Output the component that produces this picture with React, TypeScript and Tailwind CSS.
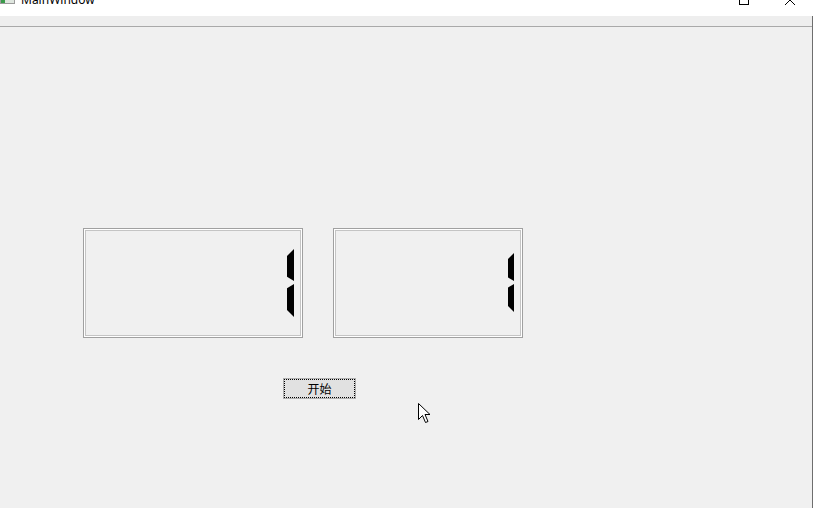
import React from "react";

// one lit segment of a seven-segment digit, right-hand column
function Segment({ w, h, upper }: { w: number; h: number; upper: boolean }) {
  const pts = upper
    ? `${w},0 ${w},${h} 0,${h - w * 0.6} 0,${w}`
    : `0,${w * 0.6} ${w},0 ${w},${h} 0,${h - w}`;
  return (
    <svg width={w} height={h} viewBox={`0 0 ${w} ${h}`} className="block">
      <polygon points={pts} fill="#000" />
    </svg>
  );
}

function LcdNumber({
  width,
  segW,
  topH,
  bottomH,
  topOffset,
  right,
}: {
  width: string;
  segW: number;
  topH: number;
  bottomH: number;
  topOffset: string;
  right: string;
}) {
  return (
    <div
      className={`${width} h-[110px] border border-[#a0a0a0] shadow-[inset_0_0_0_1px_#ffffff,inset_0_0_0_2px_#c4c4c4] flex flex-col items-end ${right}`}
    >
      <div className={`${topOffset} flex flex-col gap-[3px]`}>
        <Segment w={segW} h={topH} upper />
        <Segment w={segW} h={bottomH} upper={false} />
      </div>
    </div>
  );
}

function Cursor() {
  return (
    <svg
      width="14"
      height="21"
      viewBox="0 0 14 21"
      className="absolute left-[418px] top-[387px]"
    >
      <path
        d="M0.5 0.5 L0.5 16.5 L4.5 12.5 L7.5 19.5 L10 18.5 L7 11.5 L12 11.5 Z"
        fill="#fff"
        stroke="#000"
        strokeWidth="1"
        strokeLinejoin="miter"
      />
    </svg>
  );
}

export default function App() {
  return (
    <div className="w-[813px] h-[508px] overflow-hidden flex flex-col bg-[#f0f0f0] font-['Segoe_UI','Noto_Sans',sans-serif]">
      {/* title bar, its upper half is off screen */}
      <div className="h-4 shrink-0 bg-white overflow-hidden">
        <div className="h-[30px] -mt-[15px] flex items-center">
          <div className="w-[15px] h-[16px] -mt-[8px] border border-[#9a9a9a] bg-[#dfe6df] flex">
            <div className="w-[4px] bg-[#3a9a4a]" />
          </div>
          <span className="ml-[6px] text-[12px] text-black leading-none">
            MainWindow
          </span>
          <div className="ml-auto flex h-full">
            <div className="w-[46px] h-full flex items-center justify-center">
              <svg width="10" height="10" viewBox="0 0 10 10">
                <rect x="0.5" y="0.5" width="9" height="9" fill="none" stroke="#000" />
              </svg>
            </div>
            <div className="w-[46px] h-full flex items-center justify-center">
              <svg width="10" height="10" viewBox="0 0 10 10">
                <path d="M0 0 L10 10 M10 0 L0 10" stroke="#000" strokeWidth="1" />
              </svg>
            </div>
          </div>
        </div>
      </div>

      <div className="flex-1 flex flex-col border-r border-[#6e6e6e] relative">
        {/* menu bar strip */}
        <div className="h-[11px] shrink-0 bg-[#eeeeee] border-b border-[#a9a9a9]" />

        <div className="flex-1 flex flex-col">
          <div className="mt-[201px] ml-[83px] flex gap-[30px]">
            <LcdNumber
              width="w-[220px]"
              segW={7}
              topH={32}
              bottomH={33}
              topOffset="mt-[20px]"
              right="pr-[8px]"
            />
            <LcdNumber
              width="w-[190px]"
              segW={6}
              topH={28}
              bottomH={28}
              topOffset="mt-[24px]"
              right="pr-[8px]"
            />
          </div>

          <button className="mt-[40px] ml-[283px] w-[73px] h-[21px] bg-[#e1e1e1] border border-[#adadad] p-0">
            <div className="h-full w-full border border-dotted border-black flex items-center justify-center text-[12px] leading-none text-black font-['Noto_Sans_CJK_SC',sans-serif]">
              开始
            </div>
          </button>
        </div>

        <Cursor />
      </div>
    </div>
  );
}
